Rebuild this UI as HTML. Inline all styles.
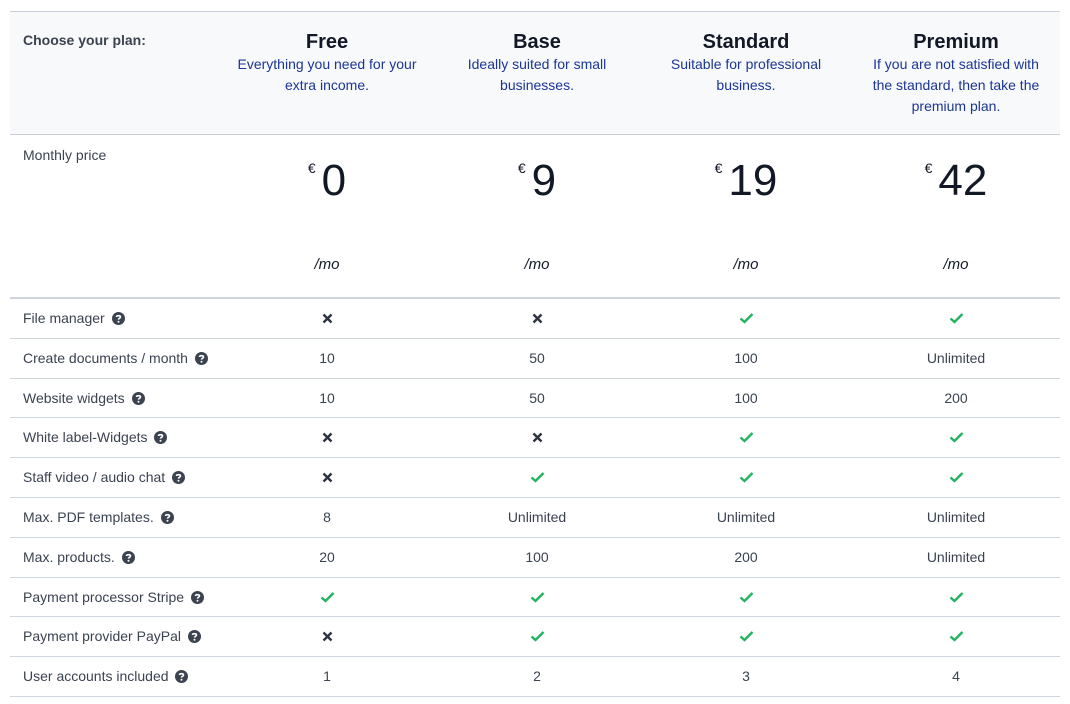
<!DOCTYPE html>
<html><head><meta charset="utf-8"><style>
body{margin:0;width:1070px;height:704px;background:#fff;font-family:"Liberation Sans",sans-serif;color:#3b4250;position:relative;overflow:hidden}
.a{position:absolute}
.hd{left:10px;top:11px;width:1050px;height:124px;background:#f8f9fb;border-top:1px solid #c8cdd6;border-bottom:1px solid #c8cdd6;box-sizing:border-box}
.c{position:absolute;width:210px;text-align:center}
.nm{font-weight:bold;font-size:20px;color:#121826;line-height:24px}
.ds{font-size:14px;color:#1a3596;line-height:21px;padding:0 12px}
.row{position:absolute;left:10px;width:1050px;border-bottom:1px solid #cfd5df;box-sizing:border-box;font-size:14px}
.row .l{position:absolute;left:13px;top:11px;line-height:16px}
.row .v{position:absolute;top:11px;width:210px;text-align:center;line-height:16px}
.row .l svg{vertical-align:-2px;margin-left:3px}
.row .v svg{vertical-align:-1px}
.pr{font-size:44px;color:#121826;font-weight:normal}
.pr sup{font-size:14px;vertical-align:22px;margin-right:6px}
</style></head><body>
<div class="a hd"></div>
<div class="a" style="left:23px;top:32px;font-size:14px;font-weight:bold;color:#3b4250">Choose your plan:</div>
<div class="c" style="left:222px;top:30px"><div class="nm">Free</div><div class="ds">Everything you need for your extra income.</div></div>
<div class="c" style="left:432px;top:30px"><div class="nm">Base</div><div class="ds">Ideally suited for small businesses.</div></div>
<div class="c" style="left:641px;top:30px"><div class="nm">Standard</div><div class="ds">Suitable for professional business.</div></div>
<div class="c" style="left:851px;top:30px"><div class="nm">Premium</div><div class="ds">If you are not satisfied with the standard, then take the premium plan.</div></div>
<div class="a" style="left:23px;top:147px;font-size:14px">Monthly price</div>
<div class="c pr" style="left:222px;top:156px"><sup>€</sup>0</div>
<div class="c pr" style="left:432px;top:156px"><sup>€</sup>9</div>
<div class="c pr" style="left:641px;top:156px"><sup>€</sup>19</div>
<div class="c pr" style="left:851px;top:156px"><sup>€</sup>42</div>
<div class="c" style="left:222px;top:256px;font-size:15px;font-style:italic;color:#121826">/mo</div>
<div class="c" style="left:432px;top:256px;font-size:15px;font-style:italic;color:#121826">/mo</div>
<div class="c" style="left:641px;top:256px;font-size:15px;font-style:italic;color:#121826">/mo</div>
<div class="c" style="left:851px;top:256px;font-size:15px;font-style:italic;color:#121826">/mo</div>
<div class="a" style="left:10px;top:297px;width:1050px;border-top:2px solid #cfd5df"></div>
<div id="rows"></div>
<script>
var Q='<svg width="13" height="13" viewBox="0 0 13 13"><circle cx="6.5" cy="6.5" r="6.5" fill="#3b4250"/><path d="M4.5 5C4.5 3.2 8.5 3.2 8.5 5C8.5 6.3 6.5 6.3 6.5 7.6" stroke="#fff" stroke-width="1.6" fill="none"/><circle cx="6.5" cy="9.8" r="1" fill="#fff"/></svg>';
var X='<svg width="11" height="11" viewBox="0 0 11 11"><path d="M1.5 1.5L9.5 9.5M9.5 1.5L1.5 9.5" stroke="#2d3340" stroke-width="2.4"/></svg>';
var V='<svg width="15" height="12" viewBox="0 0 15 12"><path d="M1.5 6.5L5.5 10L13.5 2" stroke="#22b35e" stroke-width="2.4" fill="none"/></svg>';
var d=[["File manager",X,X,V,V],["Create documents / month","10","50","100","Unlimited"],["Website widgets","10","50","100","200"],["White label-Widgets",X,X,V,V],["Staff video / audio chat",X,V,V,V],["Max. PDF templates.","8","Unlimited","Unlimited","Unlimited"],["Max. products.","20","100","200","Unlimited"],["Payment processor Stripe",V,V,V,V],["Payment provider PayPal",X,V,V,V],["User accounts included","1","2","3","4"]];
var L=[212,422,631,841],h='';
d.forEach(function(r,i){var t=Math.round(298+i*39.8)+(i==0?1:1),b=Math.round(298+(i+1)*39.8)+1;h+='<div class="row" style="top:'+t+'px;height:'+(b-t)+'px"><span class="l">'+r[0]+' '+Q+'</span>';for(var j=0;j<4;j++)h+='<span class="v" style="left:'+L[j]+'px">'+r[j+1]+'</span>';h+='</div>';});
document.getElementById('rows').innerHTML=h;
</script>
</body></html>
